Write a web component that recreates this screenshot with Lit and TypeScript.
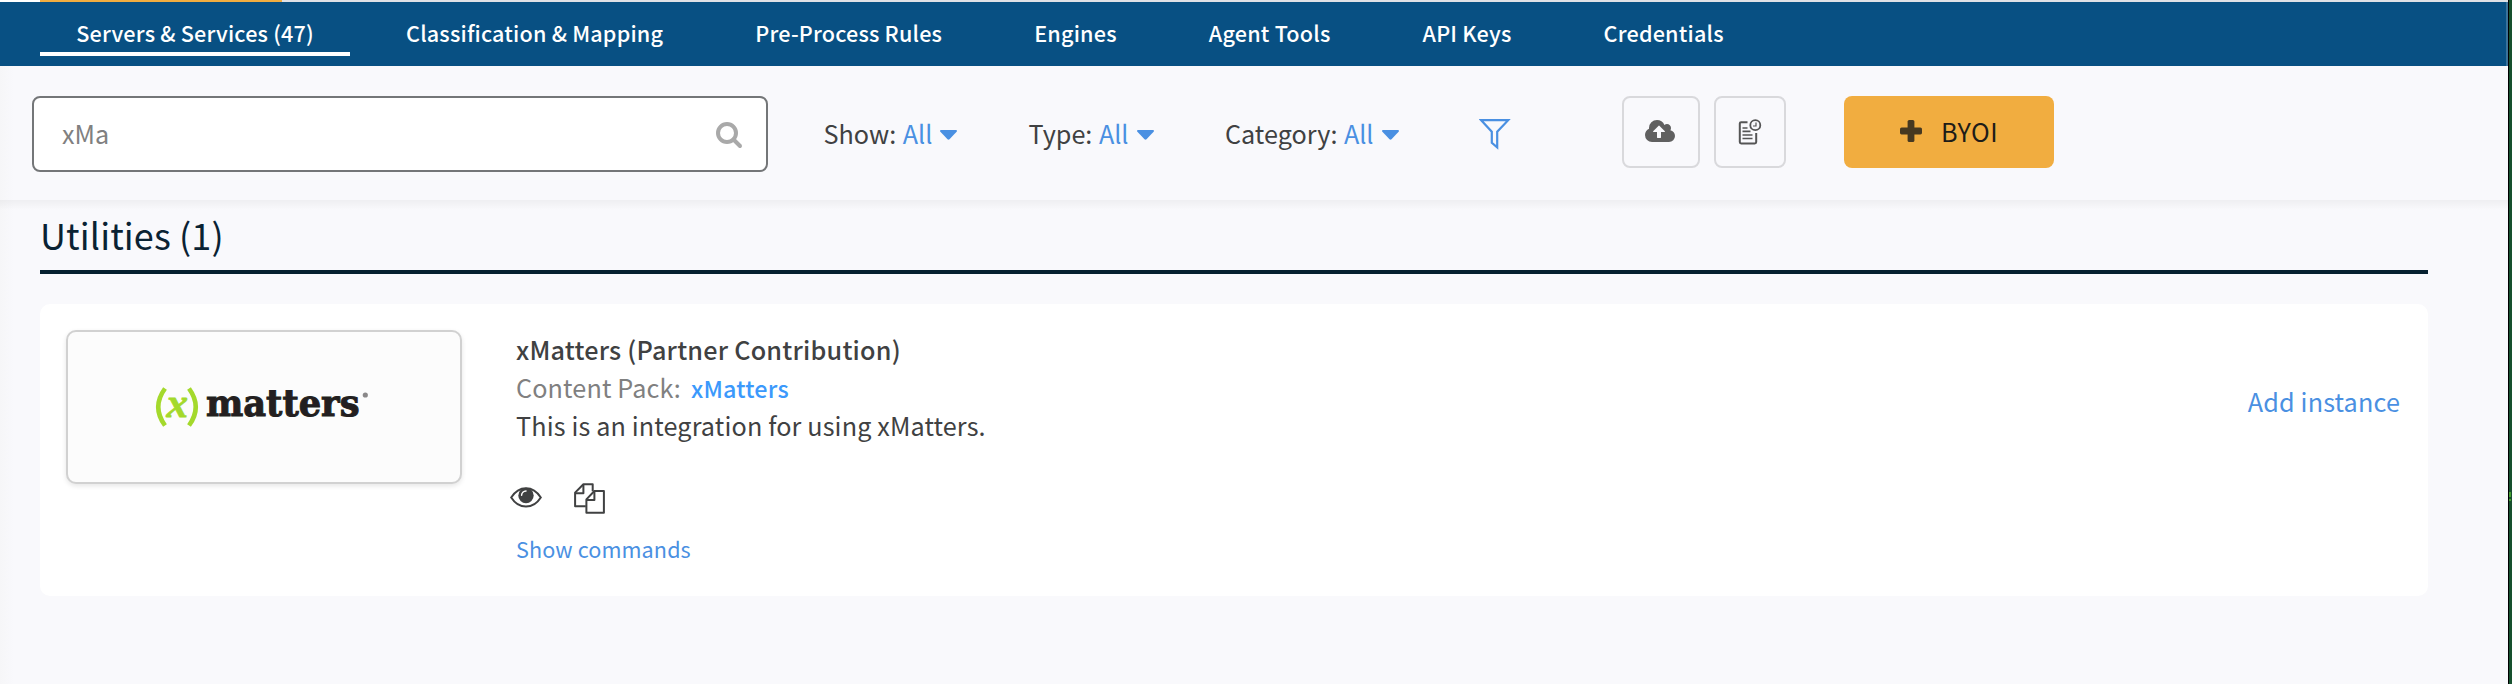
import { LitElement, html, css, svg } from 'lit';
import { customElement, property } from 'lit/decorators.js';
import { classMap } from 'lit/directives/class-map.js';

const TABS = [
  'Servers & Services (47)',
  'Classification & Mapping',
  'Pre-Process Rules',
  'Engines',
  'Agent Tools',
  'API Keys',
  'Credentials',
];

const caret = svg`<path d="M1.2 0h14.6c1 0 1.5 1 .8 1.8L9.5 9.2c-.6.6-1.4.6-2 0L.4 1.800C-.3 1 .2 0 1.200 0z" fill="#4a90e2"/>`;

@customElement('filter-select')
export class FilterSelect extends LitElement {
  static styles = css`
    :host { display: flex; align-items: center; height: 74px; flex: none; }
    .label { color: #404142; margin-right: 6.5px; }
    .value { color: #4a90e2; margin-right: 8px; }
    svg { display: block; margin-top: 3px; }
  `;
  @property() label = '';
  @property() value = 'All';
  render() {
    return html`<span class="label">${this.label}:</span><span class="value">${this.value}</span>
      <svg width="17" height="10" viewBox="0 0 17 10">${caret}</svg>`;
  }
}

@customElement('integration-card')
export class IntegrationCard extends LitElement {
  static styles = css`
    :host {
      display: flex; align-items: flex-start; box-sizing: border-box; height: 292px;
      padding: 26px 28px 0 26px; background: #fff; border-radius: 10px;
    }
    .logo {
      box-sizing: border-box; width: 396px; height: 154px; flex: none;
      border: 2px solid #d1d1d1; border-radius: 10px; background: #fcfcfc;
      box-shadow: 0 2px 5px rgba(0, 0, 0, .1);
    }
    .logo svg { display: block; }
    .info { margin-left: 54px; flex: 1; line-height: 38px; letter-spacing: .13px; color: #404142; }
    .title { font-weight: 500; letter-spacing: .22px; }
    .pack { display: flex; gap: 10px; color: #808080; }
    .pack a { padding-top: 1px; height: 37px; font-size: 23.4px; font-weight: 500; letter-spacing: .2px; color: #3b99fc; }
    .actions { display: flex; align-items: center; gap: 32px; height: 31px; margin: 39px 0 0 -6px; }
    .actions svg { display: block; }
    .actions .eye { margin-bottom: 3px; }
    .commands { margin-top: 15.5px; font-size: 21.6px; letter-spacing: .1px; color: #4a90e2; }
    .add { margin-top: 52px; line-height: 38px; letter-spacing: .16px; color: #4a90e2; }
  `;
  render() {
    return html`
      <div class="logo">
        <svg width="392" height="150" viewBox="68 332 392 150">
          <g fill="none" stroke="#a4d92c" stroke-width="4.600">
            <path d="M165 388.500Q151.500 407 165 425.500"/>
            <path d="M189 388.500Q202.500 407 189 425.500"/>
          </g>
          <text x="166.500" y="416.500" font-family="Liberation Serif, serif" font-weight="700" font-style="italic" font-size="43" fill="#a4d92c" stroke="#a4d92c" stroke-width=".8">x</text>
          <text x="206" y="416.300" font-family="DejaVu Serif, serif" font-weight="700" font-size="36.500" fill="#231f20" stroke="#231f20" stroke-width="1" textLength="153.500" lengthAdjust="spacingAndGlyphs">matters</text>
          <circle cx="365.300" cy="395" r="2.600" fill="#8a8889"/>
        </svg>
      </div>
      <div class="info">
        <div class="title">xMatters (Partner Contribution)</div>
        <div class="pack"><span>Content Pack:</span><a>xMatters</a></div>
        <div>This is an integration for using xMatters.</div>
        <div class="actions">
          <svg class="eye" width="32" height="21" viewBox="0 0 32 21">
            <path d="M1.200 10.500C5 4.500 10 1.200 16 1.200S27 4.500 30.800 10.500C27 16.500 22 19.600 16 19.600S5 16.500 1.200 10.500Z" fill="none" stroke="#404142" stroke-width="2"/>
            <circle cx="16" cy="8.500" r="7.700" fill="#404142"/>
            <path d="M11.600 8.300A4.500 4.500 0 0 1 16 3.900" fill="none" stroke="#fff" stroke-width="1.500" stroke-linecap="round"/>
          </svg>
          <svg width="31" height="31" viewBox="0 0 31 31" fill="none" stroke="#404142" stroke-width="2" stroke-linejoin="round">
            <path d="M11.800 23.300H1.100V9.600L9.400 1.200H18.700V8.300"/>
            <path d="M1.100 10.200H9.400V1.200"/>
            <path d="M12.400 16.400V29.700H29.900V8H20.400Z"/>
            <path d="M12.400 16.900H20.400V8"/>
          </svg>
        </div>
        <div class="commands">Show commands</div>
      </div>
      <a class="add">Add instance</a>`;
  }
}

@customElement('app-root')
export class AppRoot extends LitElement {
  static styles = css`
    :host {
      display: flex; height: 684px; overflow: hidden; background: #f9f9fc;
      font: 400 25.2px "Noto Sans CJK SC", "Source Sans Pro", sans-serif; color: #404142;
    }
    .page { flex: 1; min-width: 0; background: linear-gradient(90deg, #f6f6f8, #f9f9fc 14px); }
    .strip { display: flex; height: 2px; background: #dfe1e6; }
    .strip .blank { width: 40px; background: #fff; }
    .strip .mark { width: 242px; background: #f1ad40; }
    nav {
      display: flex; box-sizing: border-box; height: 64px; padding-left: 40px; gap: 19.5px;
      background: #085083; border-right: 2px solid #3b739c;
    }
    .tab {
      box-sizing: border-box; height: 54px; padding: 11px 36.3px 0; line-height: 39px;
      border-bottom: 4px solid transparent; color: #fff; white-space: nowrap;
      font-size: 21.6px; font-weight: 500; letter-spacing: .19px;
    }
    .tab.active { border-bottom-color: #fff; }
    .toolbar { display: flex; align-items: flex-start; box-sizing: border-box; height: 134px; padding: 30px 0 0 32px; }
    .search {
      display: flex; align-items: flex-start; justify-content: space-between; box-sizing: border-box;
      width: 736px; height: 76px; margin-right: 55.5px; padding: 0 23px 0 28px; flex: none;
      border: 2px solid #747678; border-radius: 8px; background: #fff; color: #808080;
    }
    .search span { line-height: 70px; }
    .search svg { display: block; margin-top: 24px; }
    .show { width: 205px; }
    .type { width: 196.5px; }
    .category { width: 253.5px; }
    .funnel { display: block; width: 143px; margin-top: 23px; flex: none; }
    .btn {
      display: flex; align-items: center; justify-content: center; box-sizing: border-box;
      height: 72px; padding-bottom: 2px; border: 2px solid #d9d9dc; border-radius: 8px;
    }
    .upload { width: 78px; padding-right: 2px; }
    .log { width: 72px; margin-left: 14px; padding: 0 0 0 1px; }
    .byoi {
      width: 210px; margin-left: 58px; padding-left: 1px; gap: 19px; border: 0; background: #f1ad40; color: #1e1c18;
      letter-spacing: .5px;
    }
    main { height: 484px; padding: 0 80px 0 40px; background: linear-gradient(rgba(0, 0, 0, .045), transparent 10px); }
    h2 {
      box-sizing: border-box; height: 74px; margin: 0 0 30px; line-height: 68.6px;
      border-bottom: 4px solid #062030; color: #0a2233; font-size: 36px; font-weight: 400; letter-spacing: .12px;
    }
    .edge { width: 3px; flex: none; border-left: 1px solid #000; background: #17502e; }
    .edge .chip { width: 2px; height: 5px; margin-top: 492px; background: #46a033; }
    .edge .chip + .chip { height: 2px; margin-top: 2px; }
  `;
  render() {
    return html`
      <div class="page">
        <div class="strip"><div class="blank"></div><div class="mark"></div></div>
        <nav>${TABS.map((t, i) => html`<div class=${classMap({ tab: true, active: i === 0 })}>${t}</div>`)}</nav>
        <div class="toolbar">
          <div class="search">
            <span>xMa</span>
            <svg width="27" height="27" viewBox="0 0 27 27" fill="none" stroke="#a9a9a9" stroke-width="4">
              <circle cx="11" cy="11" r="9"/><path d="M17.500 17.500L24 24" stroke-linecap="round"/>
            </svg>
          </div>
          <filter-select class="show" label="Show"></filter-select>
          <filter-select class="type" label="Type"></filter-select>
          <filter-select class="category" label="Category"></filter-select>
          <svg class="funnel" height="31" viewBox="0 0 143 31" fill="none" stroke="#4a90e2" stroke-width="2.200">
            <path d="M2.200 1.200H29.200L18.200 12.800V28.300L12.800 23.800V12.800Z"/>
          </svg>
          <div class="btn upload">
            <svg width="30" height="22" viewBox="0 0 1920 1408"><path fill="#606060" d="M1280 736q0-14-9-23L919 361q-9-9-23-9t-23 9L522 712q-10 12-10 24 0 14 9 23t23 9h224v352q0 13 9.500 22.500t22.500 9.500h192q13 0 22.500-9.500t9.500-22.500V768h224q13 0 22.500-9.500t9.500-22.500zm640 288q0 159-112.500 271.500T1536 1408H448q-185 0-316.500-131.500T0 960q0-130 70-240t188-165q-2-30-2-43 0-212 150-362T768 0q156 0 285.500 87T1242 318q71-62 166-62 106 0 181 75t75 181q0 76-41 138 130 31 213.500 135.500T1920 1024z"/></svg>
          </div>
          <div class="btn log">
            <svg width="24" height="26" viewBox="0 0 24 26" fill="none" stroke="#555">
              <path d="M9.500 3.200H3.200Q1.800 3.200 1.800 4.600V23Q1.800 24.400 3.200 24.400H16.800Q18.200 24.400 18.200 23V14" stroke-width="2"/>
              <path d="M4.500 9H9.500M4.500 12.300H12.500M4.500 16H14.500M4.500 19.500H14.500" stroke-width="1.700"/>
              <circle cx="17.300" cy="6.200" r="5" stroke-width="1.800"/>
              <path d="M18 3.500V7H15" stroke-width="1.200"/>
            </svg>
          </div>
          <div class="btn byoi">
            <svg width="22" height="22" viewBox="0 0 22 22" fill="#463820">
              <rect x="7.600" width="6.800" height="22" rx="1.600"/><rect y="7.600" width="22" height="6.800" rx="1.600"/>
            </svg>
            <span>BYOI</span>
          </div>
        </div>
        <main>
          <h2>Utilities (1)</h2>
          <integration-card></integration-card>
        </main>
      </div>
      <div class="edge"><div class="chip"></div><div class="chip"></div></div>`;
  }
}
